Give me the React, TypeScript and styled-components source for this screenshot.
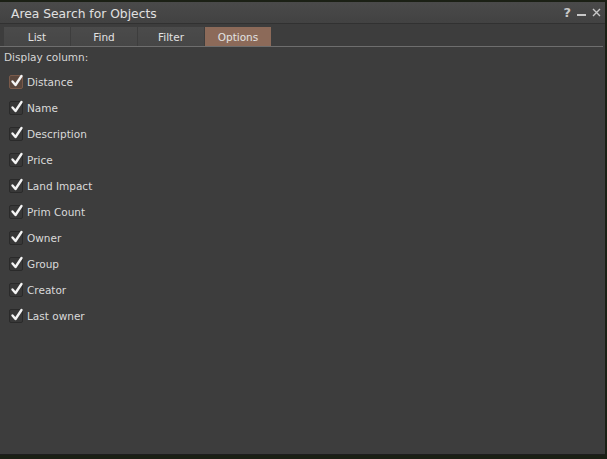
import React from 'react'
import { styled, createGlobalStyle } from 'styled-components'

const GlobalStyle = createGlobalStyle`
  html, body {
    margin: 0;
    padding: 0;
    background: #1b2015;
  }
  body {
    font-family: "DejaVu Sans", "Liberation Sans", sans-serif;
    color: #d8d8d8;
  }
`

const Floater = styled.div`
  margin-top: 2px;
  width: 605px;
  height: 453px;
  background: #3d3d3d;
  border-bottom: 1px solid #1e1e1e;
  display: flex;
  flex-direction: column;
  box-sizing: border-box;
`

const TitleBar = styled.div`
  height: 21px;
  display: flex;
  align-items: center;
  padding: 0 4px 0 11px;
  background: linear-gradient(#4a4a4a, #424242);
  border-bottom: 1px solid #313131;
`

const Title = styled.div`
  flex: 1;
  font-size: 12.3px;
  color: #e0e0e0;
  padding-top: 2px;
`

const TitleButtons = styled.div`
  display: flex;
  align-items: center;
  gap: 6px;
`

const TabBar = styled.div`
  display: flex;
  gap: 1px;
  padding: 3px 4px 0 4px;
  height: 19px;
  border-bottom: 1px solid #6e6e6e;
  margin-right: 2px;
`

const Tab = styled.div<{ $active?: boolean }>`
  width: 66px;
  display: flex;
  align-items: center;
  justify-content: center;
  font-size: 10.5px;
  color: #e2e2e2;
  background: ${p => (p.$active ? '#8c6a59' : 'linear-gradient(#4b4b4b, #464646)')};
`

const Panel = styled.div`
  display: flex;
  flex-direction: column;
  padding: 4px 4px 0 4px;
`

const Label = styled.div`
  font-size: 10.5px;
  color: #d6d6d6;
  height: 13px;
  margin-bottom: 9px;
`

const List = styled.div`
  display: flex;
  flex-direction: column;
  gap: 8px;
  padding-left: 5px;
`

const Row = styled.div`
  display: flex;
  align-items: center;
  gap: 4px;
  height: 18px;
  font-size: 10.5px;
  color: #dadada;
`

const Box = styled.div<{ $focus?: boolean }>`
  width: 14px;
  height: 14px;
  box-sizing: border-box;
  border: 1px solid ${p => (p.$focus ? '#7a5a4a' : '#2a2a2a')};
  background: ${p => (p.$focus ? '#5a463c' : '#383838')};
  border-radius: 2px;
  position: relative;
`

const Check = () => (
  <svg width="14" height="14" viewBox="0 0 14 14" style={{ position: 'absolute', left: 0, top: -2 }}>
    <path d="M2.5 7.5 L5.5 11 L11.5 2" stroke="#f4f4f4" strokeWidth="2.4" fill="none" strokeLinecap="round" strokeLinejoin="round" />
  </svg>
)

const Help = styled.span`
  font-size: 13px;
  font-weight: bold;
  color: #c8c8c8;
`

const columns = [
  'Distance',
  'Name',
  'Description',
  'Price',
  'Land Impact',
  'Prim Count',
  'Owner',
  'Group',
  'Creator',
  'Last owner',
]

export default function App() {
  return (
    <>
      <GlobalStyle />
      <Floater>
        <TitleBar>
          <Title>Area Search for Objects</Title>
          <TitleButtons>
            <Help>?</Help>
            <svg width="9" height="9" viewBox="0 0 9 9">
              <rect x="0" y="6" width="9" height="2" fill="#c8c8c8" />
            </svg>
            <svg width="9" height="9" viewBox="0 0 9 9">
              <path d="M1 1 L8 8 M8 1 L1 8" stroke="#c8c8c8" strokeWidth="1.4" />
            </svg>
          </TitleButtons>
        </TitleBar>
        <TabBar>
          <Tab>List</Tab>
          <Tab>Find</Tab>
          <Tab>Filter</Tab>
          <Tab $active>Options</Tab>
        </TabBar>
        <Panel>
          <Label>Display column:</Label>
          <List>
            {columns.map((c, i) => (
              <Row key={c}>
                <Box $focus={i === 0}>
                  <Check />
                </Box>
                {c}
              </Row>
            ))}
          </List>
        </Panel>
      </Floater>
    </>
  )
}
